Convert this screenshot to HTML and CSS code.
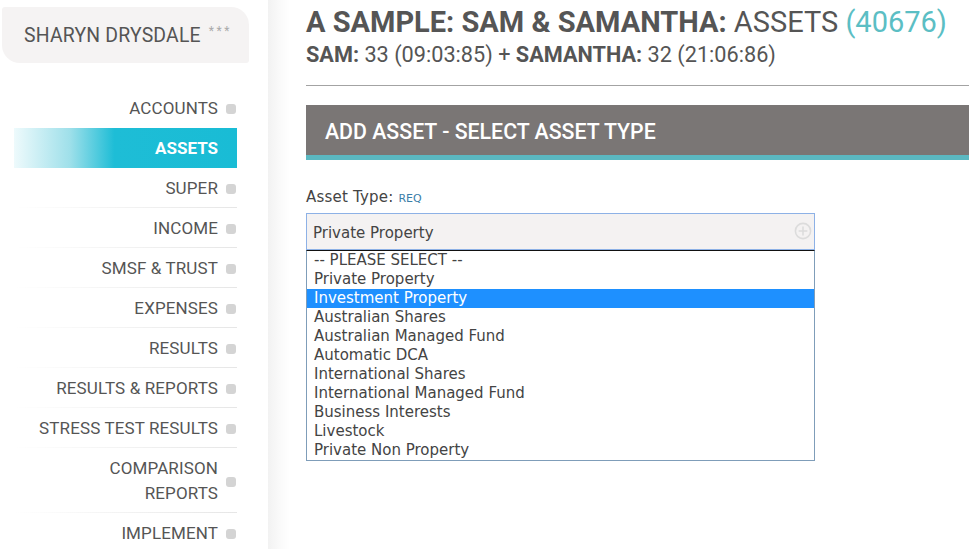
FILE: index.html
```html
<!DOCTYPE html>
<html>
<head>
<meta charset="utf-8">
<link rel="stylesheet" href="styles.css">
</head>
<body>
<div class="page">
  <aside class="sidebar">
    <div class="user-box">
      <span class="user-name">SHARYN DRYSDALE</span>
      <span class="stars">***</span>
    </div>
    <nav class="nav">
      <div class="nav-item plain"><span class="nav-text">ACCOUNTS</span><span class="nav-icon"></span></div>
      <div class="nav-item active"><span class="nav-text">ASSETS</span><span class="nav-icon"></span></div>
      <div class="nav-item"><span class="nav-text">SUPER</span><span class="nav-icon"></span></div>
      <div class="nav-item"><span class="nav-text">INCOME</span><span class="nav-icon"></span></div>
      <div class="nav-item"><span class="nav-text">SMSF &amp; TRUST</span><span class="nav-icon"></span></div>
      <div class="nav-item"><span class="nav-text">EXPENSES</span><span class="nav-icon"></span></div>
      <div class="nav-item"><span class="nav-text">RESULTS</span><span class="nav-icon"></span></div>
      <div class="nav-item"><span class="nav-text">RESULTS &amp; REPORTS</span><span class="nav-icon"></span></div>
      <div class="nav-item"><span class="nav-text">STRESS TEST RESULTS</span><span class="nav-icon"></span></div>
      <div class="nav-item tall"><span class="nav-text">COMPARISON<br>REPORTS</span><span class="nav-icon"></span></div>
      <div class="nav-item plain"><span class="nav-text">IMPLEMENT</span><span class="nav-icon"></span></div>
    </nav>
  </aside>
  <main class="main">
    <h1 class="title"><b>A SAMPLE: SAM &amp; SAMANTHA:</b> ASSETS <span class="count">(40676)</span></h1>
    <div class="subtitle"><b>SAM:</b> 33 (09:03:85) + <b>SAMANTHA:</b> 32 (21:06:86)</div>
    <div class="rule"></div>
    <div class="panel-head">ADD ASSET - SELECT ASSET TYPE</div>
    <div class="field">
      <label class="field-label">Asset Type: <span class="req">REQ</span></label>
      <div class="select-wrap">
        <div class="select">
          <span>Private Property</span>
          <svg class="plus" width="18" height="18" viewBox="0 0 18 18">
            <circle cx="9" cy="9" r="7.6" fill="none" stroke="#dcdcdc" stroke-width="1.6"/>
            <path d="M9 4.6V13.4M4.6 9H13.4" stroke="#dcdcdc" stroke-width="1.6"/>
          </svg>
        </div>
        <ul class="options">
          <li>-- PLEASE SELECT --</li>
          <li>Private Property</li>
          <li class="hl">Investment Property</li>
          <li>Australian Shares</li>
          <li>Australian Managed Fund</li>
          <li>Automatic DCA</li>
          <li>International Shares</li>
          <li>International Managed Fund</li>
          <li>Business Interests</li>
          <li>Livestock</li>
          <li>Private Non Property</li>
        </ul>
      </div>
    </div>
  </main>
</div>
</body>
</html>
```

FILE: styles.css
```css
* { box-sizing: border-box; }
html, body { margin: 0; padding: 0; background: #fff; }
body { font-family: Roboto, "Noto Sans", sans-serif; color: #555; overflow: hidden; height: 549px; }

.page { display: flex; height: 549px; }

.sidebar { width: 268px; flex: none; padding: 7px 0 0 2px; }

.user-box {
  width: 247px; height: 56px;
  background: #f5f3f3;
  border-radius: 3px 18px 3px 18px;
  display: flex; align-items: center;
  padding-left: 22px;
}
.user-name { font-size: 19.4px; color: #555; letter-spacing: 0.2px; }
.stars { font-size: 12px; color: #aaa; margin-left: 8px; margin-top: -8px; letter-spacing: 2.5px; }

.nav { margin-top: 25px; width: 235px; }
.nav-item {
  height: 40px;
  display: flex; align-items: center; justify-content: flex-end;
  gap: 8px; padding-right: 1px;
  margin-left: 12px;
  font-size: 17px; color: #555; letter-spacing: 0.12px;
  background: linear-gradient(to right, rgba(230,230,230,0), #e6e6e6) no-repeat left bottom / 100% 1px;
}
.nav-item.plain { background: none; }
.nav-item.tall { height: 65px; line-height: 25px; text-align: right; }
.nav-text { text-align: right; }
.nav-icon { width: 10px; height: 10px; border-radius: 3px; background: #d4d4d4; flex: none; margin-top: 2px; }
.nav-item.active {
  background: linear-gradient(to right, #eefafc 0%, #9fe0ea 25%, #1ebdd6 45%, #19bcd5 100%);
  color: #fff; font-weight: 700; letter-spacing: 0;
}
.nav-item.active .nav-icon { visibility: hidden; }

.main {
  flex: 1;
  padding: 0 0 0 38px;
  background: linear-gradient(to right, #f2f2f2 0, #fafafa 12px, #fff 22px);
}
.title {
  margin: 4px 0 0; font-size: 29px; line-height: 36px; font-weight: 400; color: #555;
  white-space: nowrap;
}
.title b { font-weight: 700; }
.count { color: #5bbec4; }
.subtitle { font-size: 21.7px; line-height: 28px; color: #555; margin-top: 1px; }
.subtitle b { font-weight: 700; }
.rule { border-top: 1px solid #a3a3a3; margin-top: 16px; }

.panel-head {
  margin-top: 19px; height: 55px;
  background: #7a7675;
  border-bottom: 5px solid #5bb8c1;
  color: #fff; font-size: 21.3px; font-weight: 500;
  padding: 3px 0 0 19px; display: flex; align-items: center;
}

.field { margin-top: 28px; font-family: "DejaVu Sans", Verdana, sans-serif; }
.field-label { display: block; font-size: 15px; color: #444; line-height: 18px; letter-spacing: 0.2px; }
.req { font-size: 11px; color: #3a7ea8; letter-spacing: 0; }
.select-wrap { position: relative; width: 509px; margin-top: 5px; }
.select {
  height: 37px; background: #f4f2f2;
  border: 1px solid #8db1e6;
  display: flex; align-items: center; justify-content: space-between;
  padding: 2px 2px 0 6px;
  font-size: 15px; color: #444;
}
.plus { margin-top: -3px; }
.options {
  position: absolute; left: 0; top: 37px; width: 509px;
  margin: 0; padding: 0; list-style: none;
  background: #fff;
  border: 1px solid #7f9db9; border-top: 1px solid #111;
  font-size: 15px; color: #444;
}
.options li { height: 19px; line-height: 19px; padding-left: 7px; }
.options li.hl { background: #1e90ff; color: #fff; }
```
